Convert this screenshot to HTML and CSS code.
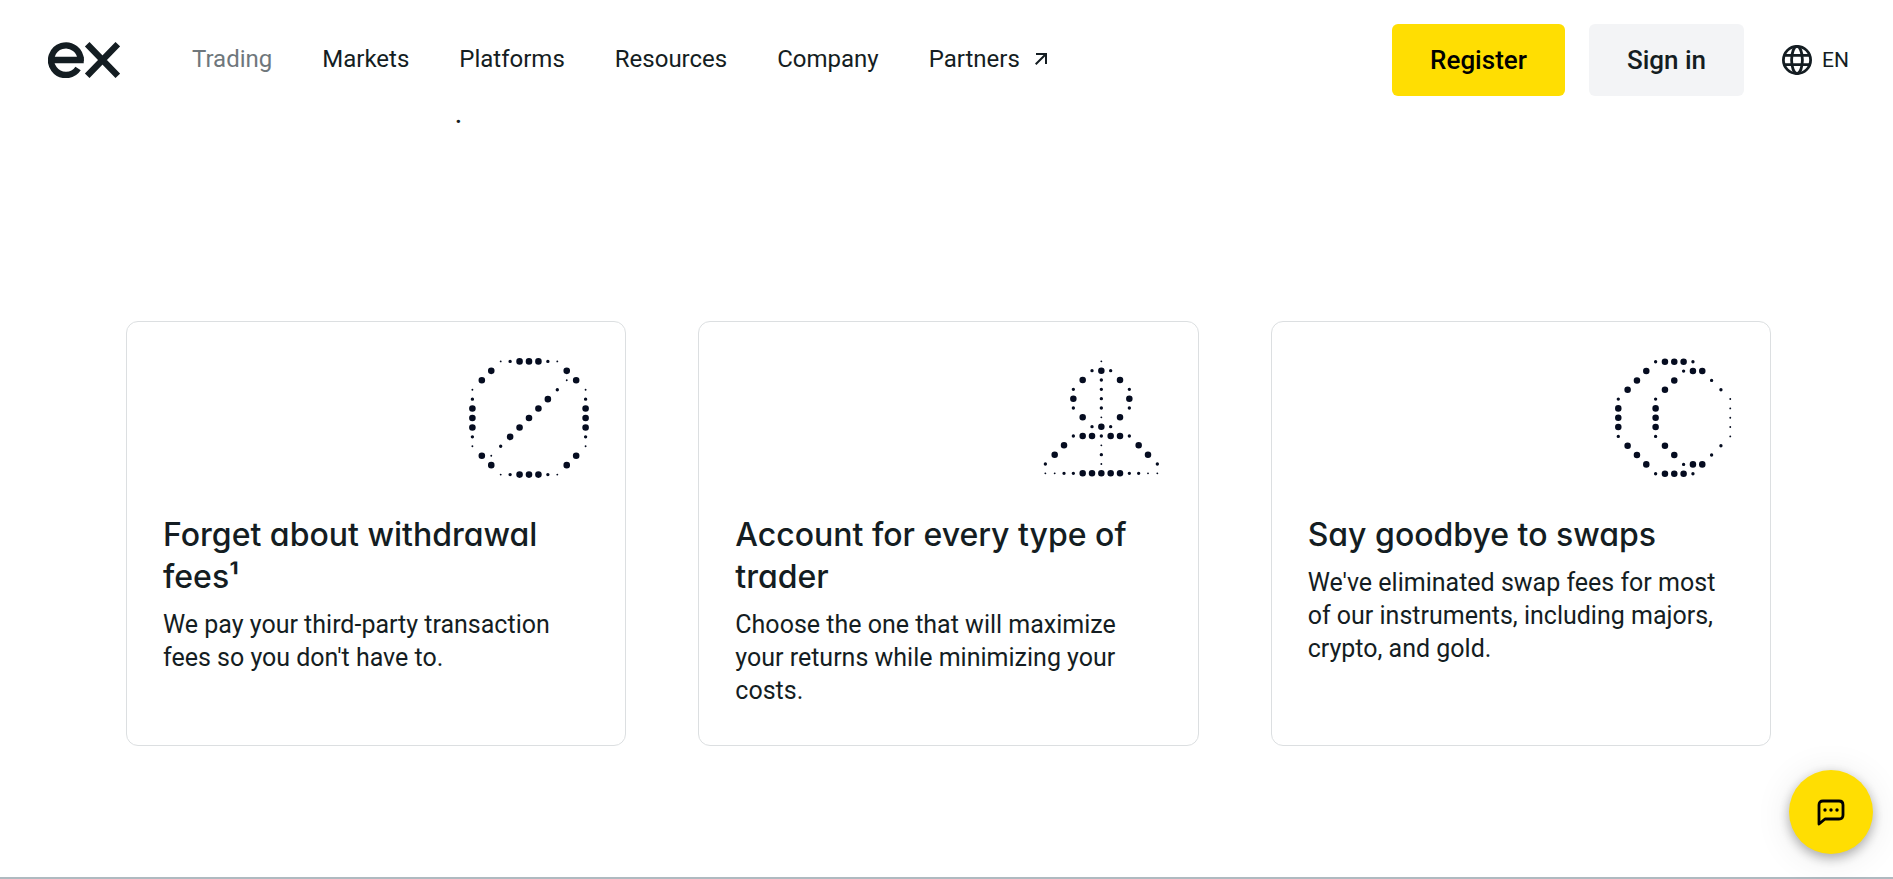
FILE: index.html
```html
<!DOCTYPE html>
<html lang="en">
<head>
    <meta charset="UTF-8">
    <meta name="viewport" content="width=device-width, initial-scale=1.0">
    <title>Trading conditions</title>
    <link rel="stylesheet" href="styles.css">
</head>
<body>

<header class="header">
    <a href="#" class="logo" aria-label="Home">
        <svg width="72" height="36" viewBox="0 0 72 36" fill="none" stroke="#141d22" stroke-width="6.400">
            <path d="M3 18H35.700"/>
            <path d="M32.600 19A14.750 14.800 0 1 0 30.100 26.500"/>
            <path d="M39.200 2.200L69.800 33.800M69.800 2.200L39.200 33.800"/>
        </svg>
    </a>
    <nav class="nav">
        <a href="#" class="active">Trading</a>
        <a href="#">Markets</a>
        <a href="#">Platforms</a>
        <a href="#">Resources</a>
        <a href="#">Company</a>
        <a href="#" class="external">Partners
            <svg width="12" height="12" viewBox="0 0 12 12" fill="none" stroke="currentColor" stroke-width="2">
                <path d="M1 1H11V11M11 1L.7 11.300"/>
            </svg>
        </a>
    </nav>
    <div class="actions">
        <button type="button" class="btn btn-register">Register</button>
        <button type="button" class="btn btn-signin">Sign in</button>
        <button type="button" class="lang">
            <svg width="30" height="30" viewBox="0 0 30 30" fill="none" stroke="currentColor" stroke-width="2.800">
                <circle cx="15" cy="15" r="13.600"/>
                <ellipse cx="15" cy="15" rx="5.400" ry="13.600"/>
                <path d="M2.400 10.400H27.600M2.400 19.600H27.600"/>
            </svg>
            EN
        </button>
    </div>
</header>

<main class="main">
    <p class="lead">.</p>

    <section class="cards">
        <article class="card">
            <svg class="dots" viewBox="-.36 -.36 12.720 12.720">
                <path class="l" d="M5 0h0M6 0h0M7 0h0M2 1h0M10 1h0M1 2h0M11 2h0M8 4h0M0 5h0M7 5h0M12 5h0M0 6h0M6 6h0M12 6h0M0 7h0M5 7h0M12 7h0M4 8h0M1 10h0M11 10h0M2 11h0M10 11h0M5 12h0M6 12h0M7 12h0"/>
                <path class="m" d="M4 0h0M8 0h0M9 3h0M0 4h0M12 4h0M0 8h0M12 8h0M3 9h0M4 12h0M8 12h0"/>
                <path class="s" d="M3 0h0M9 0h0M10 2h0M0 3h0M12 3h0M0 9h0M12 9h0M2 10h0M3 12h0M9 12h0"/>
            </svg>
            <h2>Forget about withdrawal fees¹</h2>
            <p>We pay your third-party transaction fees so you don't have to.</p>
        </article>

        <article class="card">
            <svg class="dots" viewBox="-.36 -.36 12.860 12.860">
                <path class="l" d="M6 1h0M4 2h0M8 2h0M3 4h0M9 4h0M4 6h0M8 6h0M6 7h0M4 8h0M5 8h0M7 8h0M8 8h0M2 9h0M10 9h0M1 10h0M11 10h0M4 12h0M5 12h0M6 12h0M7 12h0M8 12h0"/>
                <path class="m" d="M5 1h0M7 1h0M6 2h0M3 3h0M6 3h0M9 3h0M6 4h0M3 5h0M6 5h0M9 5h0M5 7h0M7 7h0M3 8h0M6 8h0M9 8h0M6 10h0M0 11h0M12 11h0M2 12h0M3 12h0M9 12h0M10 12h0"/>
                <path class="s" d="M6 0h0M6 6h0M6 9h0M6 11h0M0 12h0M1 12h0M11 12h0M12 12h0"/>
            </svg>
            <h2>Account for every type of trader</h2>
            <p>Choose the one that will maximize your returns while minimizing your costs.</p>
        </article>

        <article class="card">
            <svg class="dots" viewBox="-.46 -.4 12.860 12.860">
                <path class="l" d="M5 0h0M6 0h0M7 0h0M3 1h0M8 1h0M9 1h0M2 2h0M6 2h0M1 3h0M5 3h0M0 5h0M4 5h0M0 6h0M4 6h0M0 7h0M4 7h0M1 9h0M5 9h0M2 10h0M6 10h0M3 11h0M8 11h0M9 11h0M5 12h0M6 12h0M7 12h0"/>
                <path class="m" d="M4 0h0M8 0h0M7 1h0M10 2h0M11 3h0M0 4h0M4 4h0M0 8h0M4 8h0M11 9h0M10 10h0M7 11h0M4 12h0M8 12h0"/>
                <path class="s" d="M12 4h0M12 5h0M12 6h0M12 7h0M12 8h0"/>
            </svg>
            <h2>Say goodbye to swaps</h2>
            <p>We've eliminated swap fees for most of our instruments, including majors, crypto, and gold.</p>
        </article>
    </section>
</main>

<footer class="strip"></footer>

<button type="button" class="chat" aria-label="Chat">
    <svg width="28" height="28" viewBox="0 0 28 28">
        <path d="M2 26V7Q2 3 6 3H22Q26 3 26 7V17Q26 21 22 21H8Z" fill="none" stroke="#000" stroke-width="2.800" stroke-linejoin="round"/>
        <circle cx="8" cy="12" r="1.700"/>
        <circle cx="14" cy="12" r="1.700"/>
        <circle cx="20" cy="12" r="1.700"/>
    </svg>
</button>

</body>
</html>
```
FILE: styles.css
```css
* {
    box-sizing: border-box;
}
body {
    margin: 0;
    min-height: 100vh;
    display: flex;
    flex-direction: column;
    background: #fff;
    color: #141d22;
    font-family: Roboto, Arial, sans-serif;
    font-size: 25px;
    line-height: 33px;
}
h2, p {
    margin: 0;
}
svg {
    display: block;
    flex: none;
}
button {
    border: 0;
    color: inherit;
    font: inherit;
    cursor: pointer;
}

/* header */
.header {
    display: flex;
    align-items: center;
    padding: 24px 44px 0 48px;
}
.nav {
    display: flex;
    gap: 50px;
    margin-left: 72px;
    padding-bottom: 2px;
    font-size: 24px;
}
.nav a {
    color: inherit;
    text-decoration: none;
}
.nav .active {
    color: #6f777c;
}
.nav .external {
    display: flex;
    align-items: center;
    gap: 15px;
}
.actions {
    display: flex;
    align-items: center;
    margin-left: auto;
}
.btn {
    height: 72px;
    padding: 0 38px;
    border-radius: 6px;
    font-size: 26px;
    font-weight: 500;
}
.btn-register {
    margin-right: 24px;
    background: #ffde02;
    color: #000;
}
.btn-signin {
    background: #f3f4f6;
}
.lang {
    display: flex;
    align-items: center;
    gap: 10px;
    margin-left: 38px;
    padding: 0;
    background: none;
    font-size: 21px;
}

/* content */
.main {
    flex: 1;
    padding: 0 122px 128px 126px;
}
.lead {
    height: 225px;
    padding: 2px 0 0 329px;
    font-weight: 500;
}
.cards {
    display: grid;
    grid-template-columns: repeat(3, 1fr);
    gap: 72px;
}
.card {
    padding: 36px 36px 38px;
    border: 1px solid #dcdfe1;
    border-radius: 12px;
}
.card h2 {
    margin: 36px 0 10px;
    font-family: Inter, sans-serif;
    font-size: 32px;
    font-weight: 500;
    line-height: 42px;
    font-feature-settings: "cv11";
}

.dots {
    width: 120px;
    height: 120px;
    margin-left: auto;
    stroke: #050c20;
    stroke-linecap: round;
}
.dots .l {
    stroke-width: .7;
}
.dots .m {
    stroke-width: .36;
}
.dots .s {
    stroke-width: .2;
}

.strip {
    height: 2px;
    background: #afbac0;
}

.chat {
    position: fixed;
    right: 20px;
    bottom: 25px;
    display: flex;
    align-items: center;
    justify-content: center;
    width: 84px;
    height: 84px;
    padding: 0;
    border-radius: 50%;
    background: #ffde02;
    box-shadow: 0 4px 12px rgba(0, 0, 0, .3), 0 4px 36px rgba(0, 0, 0, .1);
}
```
